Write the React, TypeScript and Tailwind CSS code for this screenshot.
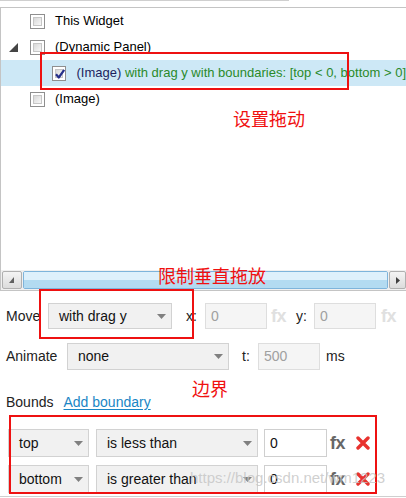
import React from "react";

const font = { fontFamily: '"Liberation Sans", "Noto Sans CJK SC", sans-serif' };

const Checkbox = ({ checked }: { checked?: boolean }) => (
  <div className="relative w-[15px] h-[15px] border border-[#8f8f8f] bg-white p-[2px]">
    <div className="w-full h-full border border-[#c6c6c6] bg-gradient-to-br from-[#d8d8d8] to-[#f8f8f8]" />
    {checked && (
      <svg className="absolute left-[1px] top-[1px]" width="12" height="12" viewBox="0 0 12 12">
        <path d="M2 6.2 L4.8 9.5 L10.2 1.8" fill="none" stroke="#25308a" strokeWidth="2.2" strokeLinejoin="round" />
      </svg>
    )}
  </div>
);

const Arrow = () => (
  <svg width="9" height="5" viewBox="0 0 9 5" className="shrink-0">
    <path d="M0 0 L9 0 L4.5 5 Z" fill="#808080" />
  </svg>
);

const Select = ({ value, w, h = "h-[26px]" }: { value: string; w: string; h?: string }) => (
  <div className={`${w} ${h} shrink-0 flex items-center justify-between pl-[10px] pr-[5px] border border-[#d2d2d2] bg-[#f1f1f1] text-[14px] text-[#111]`}>
    <span>{value}</span>
    <Arrow />
  </div>
);

const Input = ({ value, disabled, w = "w-[62px]", h = "h-[26px]" }: { value: string; disabled?: boolean; w?: string; h?: string }) => (
  <div
    className={`${w} ${h} shrink-0 flex items-center pl-[5px] text-[14px] border ${
      disabled ? "border-[#dedede] bg-[#f5f5f5] text-[#a0a0a0]" : "border-[#cfcfcf] bg-white text-[#111]"
    }`}
  >
    {value}
  </div>
);

const Fx = ({ disabled, className = "" }: { disabled?: boolean; className?: string }) => (
  <span className={`text-[18px] font-bold leading-none tracking-[-0.5px] ${disabled ? "text-[#e0e0e0]" : "text-[#676767]"} ${className}`}>
    fx
  </span>
);

const RedX = ({ className = "" }: { className?: string }) => (
  <svg width="14" height="14" viewBox="0 0 14 14" className={className}>
    <path d="M2 2 L12 12 M12 2 L2 12" stroke="#e8322e" strokeWidth="3.4" strokeLinecap="round" />
  </svg>
);

const TreeRow = ({ indent, children, selected }: { indent: string; children: React.ReactNode; selected?: boolean }) => (
  <div className={`h-[26px] flex items-center ${indent} ${selected ? "bg-[#cde8f6]" : ""}`}>{children}</div>
);

export default function App() {
  return (
    <div className="relative w-[406px] h-[498px] overflow-hidden bg-white text-black" style={font}>
      <div className="h-px w-[289px] bg-[#cfcfcf]" />

      {/* tree panel */}
      <div className="mt-[6px] h-[284px] border-t border-l border-b border-[#c4c4c4] flex flex-col text-[13px]">
        <div className="flex-1 pt-0">
          <TreeRow indent="pl-[29px]">
            <Checkbox />
            <span className="ml-[10px]">This Widget</span>
          </TreeRow>
          <TreeRow indent="pl-[8px]">
            <svg width="9" height="9" viewBox="0 0 9 9">
              <path d="M9 0 L9 9 L0 9 Z" fill="#454545" />
            </svg>
            <div className="ml-[12px]">
              <Checkbox />
            </div>
            <span className="ml-[10px]">(Dynamic Panel)</span>
          </TreeRow>
          <TreeRow indent="pl-[51px]" selected>
            <Checkbox checked />
            <span className="ml-[10px] whitespace-nowrap">
              <span className="text-[#1c1f5e]">(Image)</span>{" "}
              <span className="text-[#2a8a2a]">with drag y with boundaries: [top &lt; 0, bottom &gt; 0]</span>
            </span>
          </TreeRow>
          <TreeRow indent="pl-[29px]">
            <Checkbox />
            <span className="ml-[10px]">(Image)</span>
          </TreeRow>
        </div>

        {/* horizontal scrollbar */}
        <div className="h-[20px] bg-[#f0f0f0] flex items-center pl-[1px] gap-[1px]">
          <div className="w-[20px] h-[18px] rounded-[2px] border border-[#b0b0b0] bg-gradient-to-b from-[#f4f4f4] to-[#dcdcdc] flex items-center justify-center">
            <svg width="5" height="6" viewBox="0 0 5 6">
              <path d="M5 0 L5 6 L0 6 Z" fill="#606060" />
            </svg>
          </div>
          <div className="w-[366px] h-[18px] rounded-[2px] border border-[#7eb4db] overflow-hidden flex flex-col">
            <div className="h-1/2 bg-[#def0fb]" />
            <div className="h-1/2 bg-[#b3dbf1]" />
          </div>
          <div className="w-[17px] h-[18px] rounded-[2px] border border-[#b0b0b0] bg-gradient-to-b from-[#f4f4f4] to-[#dcdcdc] flex items-center justify-center">
            <svg width="4" height="7" viewBox="0 0 4 7">
              <path d="M0 0 L4 3.5 L0 7 Z" fill="#404040" />
            </svg>
          </div>
        </div>
      </div>

      {/* move row */}
      <div className="mt-[12px] flex items-center pl-[6px] text-[14px] text-[#222]">
        <span className="w-[42px]">Move</span>
        <Select value="with drag y" w="w-[124px]" />
        <span className="ml-[14px] w-[19px]">x:</span>
        <Input value="0" disabled />
        <Fx disabled className="ml-[4px]" />
        <span className="ml-[10px] w-[18px]">y:</span>
        <Input value="0" disabled />
        <Fx disabled className="ml-[5px]" />
      </div>

      {/* animate row */}
      <div className="mt-[14px] flex items-center pl-[6px] text-[14px] text-[#222]">
        <span className="w-[61px]">Animate</span>
        <Select value="none" w="w-[162px]" h="h-[27px]" />
        <span className="ml-[13px] w-[16px]">t:</span>
        <Input value="500" disabled h="h-[27px]" />
        <span className="ml-[6px]">ms</span>
      </div>

      {/* bounds */}
      <div className="mt-[23px] h-[18px] flex items-center pl-[6px] text-[14px] text-[#222]">
        <span>Bounds</span>
        <span className="ml-[10px] text-[#1a86c5] underline underline-offset-2">Add boundary</span>
      </div>

      <div className="mt-[18px] flex flex-col gap-[8px] pl-[8px]">
        <div className="flex items-center">
          <Select value="top" w="w-[81px]" h="h-[28px]" />
          <div className="ml-[7px]">
            <Select value="is less than" w="w-[162px]" h="h-[28px]" />
          </div>
          <div className="ml-[6px]">
            <Input value="0" w="w-[63px]" h="h-[28px]" />
          </div>
          <Fx className="ml-[3px]" />
          <RedX className="ml-[11px]" />
        </div>
        <div className="flex items-center">
          <Select value="bottom" w="w-[81px]" h="h-[28px]" />
          <div className="ml-[7px]">
            <Select value="is greater than" w="w-[162px]" h="h-[28px]" />
          </div>
          <div className="ml-[6px]">
            <Input value="0" w="w-[63px]" h="h-[28px]" />
          </div>
          <Fx className="ml-[3px]" />
          <RedX className="ml-[11px]" />
        </div>
      </div>

      <div className="absolute left-0 top-[496px] w-full h-px bg-[#cfcfcf]" />

      {/* annotations */}
      <div className="absolute left-[40px] top-[52px] w-[309px] h-[38px] border-2 border-[#ee1111]" />
      <div className="absolute left-[233px] top-[109px] text-[18px] leading-[22px] text-[#f01010]">设置拖动</div>
      <div className="absolute left-[158px] top-[266px] text-[18px] leading-[22px] text-[#f01010]">限制垂直拖放</div>
      <div className="absolute left-[39px] top-[289px] w-[155px] h-[50px] border-2 border-[#ee1111]" />
      <div className="absolute left-[192px] top-[379px] text-[18px] leading-[22px] text-[#f01010]">边界</div>
      <div className="absolute left-[9px] top-[415px] w-[368px] h-[79px] border-2 border-[#ee1111]" />

      <div className="absolute left-[190px] top-[469px] text-[15px] leading-[18px] text-[#c4c4c4]/80 whitespace-nowrap">
        https://blog.csdn.net/wm1223
      </div>
    </div>
  );
}
